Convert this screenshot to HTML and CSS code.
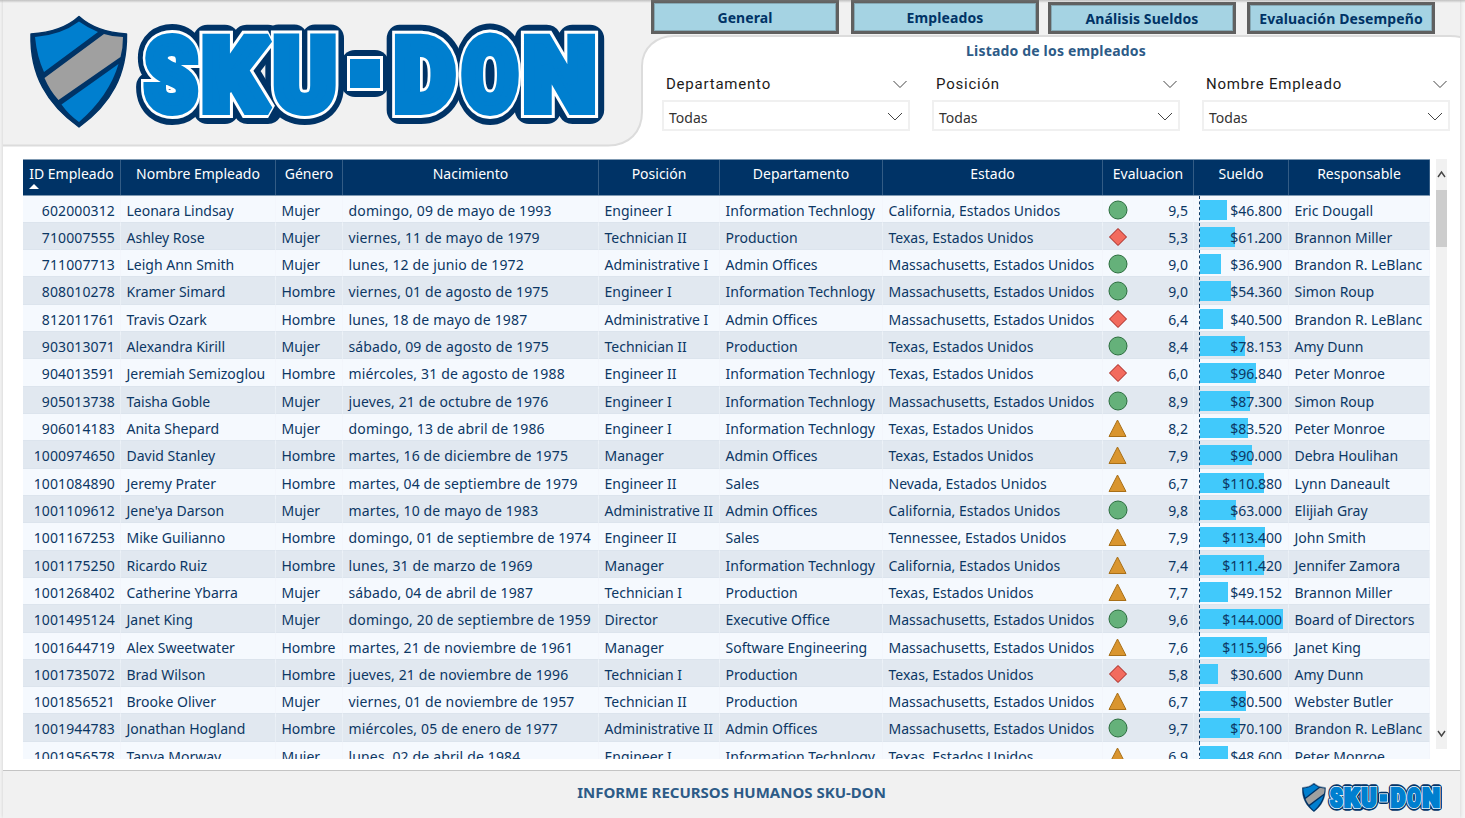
FILE: index.html
```html
<!DOCTYPE html>
<html lang="es">
<head>
<meta charset="utf-8">
<title>Informe Recursos Humanos</title>
<link rel="stylesheet" href="styles.css">
</head>
<body>
<div class="page">
  <header class="top">
    <svg class="top-shape" width="1457" height="150" viewBox="3 0 1457 150">
      <path class="band" d="M3 -5H1462V37.500Q1457 36 1450 36H674C656 36 642 48 642 66V112C642 132 629 145.500 608 145.500H-2V-5Z"/>
    </svg>
    <div class="brand">
      <svg class="logo" viewBox="30 16 575 112">
        <defs>
          <g id="mark">
            <path fill="#003366" stroke="#003366" stroke-width="1.500" stroke-linejoin="round" d="M79 16.500Q96 32 126.500 34C127 75 111 104 79 127C47 104 30 75 31 34Q62 32 79 16.500Z"/>
            <path fill="#007fcf" d="M79 21.500Q88 28 98 32L44 72Q37 57 35 37Q61 35 79 21.500Z"/>
            <path fill="#a0a0a0" d="M104 34Q113 37 123 37Q123 48 120.500 57L58.500 100Q50 91 44.500 78Z"/>
            <path fill="#007fcf" d="M118.500 64Q109 96 79 122Q69 115 61.500 104.500Z"/>
          </g>
          <g id="word">
            <text class="word" y="110"><tspan x="145" textLength="52" lengthAdjust="spacingAndGlyphs">S</tspan><tspan x="202" textLength="65" lengthAdjust="spacingAndGlyphs">K</tspan><tspan x="273.500" textLength="62.500" lengthAdjust="spacingAndGlyphs">U</tspan><tspan x="352" dy="-5" textLength="26" lengthAdjust="spacingAndGlyphs">-</tspan><tspan x="394.500" dy="5" textLength="60" lengthAdjust="spacingAndGlyphs">D</tspan><tspan x="462.500" textLength="55" lengthAdjust="spacingAndGlyphs">O</tspan><tspan x="523.500" textLength="72" lengthAdjust="spacingAndGlyphs">N</tspan></text>
            <rect x="355" y="64" width="20" height="19"/>
          </g>
        </defs>
        <use href="#mark"/>
        <use href="#word" class="w-navy"/>
        <use href="#word" class="w-white"/>
        <use href="#word" class="w-blue"/>
      </svg>
    </div>
    <div class="controls">
      <nav class="tabs">
        <a class="tab tall">General</a><a class="tab tall">Empleados</a><a class="tab">Análisis Sueldos</a><a class="tab">Evaluación Desempeño</a>
      </nav>
      <h1 class="title">Listado de los empleados</h1>
      <div class="slicers">
        <div class="slicer"><div class="s-head"><span>Departamento</span><svg width="14" height="9"><path d="M.5 1L7 7.500L13.500 1"/></svg></div><div class="s-box"><span>Todas</span><svg width="16" height="10"><path d="M1 1L8 8L15 1"/></svg></div></div>
        <div class="slicer"><div class="s-head"><span>Posición</span><svg width="14" height="9"><path d="M.5 1L7 7.500L13.500 1"/></svg></div><div class="s-box"><span>Todas</span><svg width="16" height="10"><path d="M1 1L8 8L15 1"/></svg></div></div>
        <div class="slicer"><div class="s-head"><span>Nombre Empleado</span><svg width="14" height="9"><path d="M.5 1L7 7.500L13.500 1"/></svg></div><div class="s-box"><span>Todas</span><svg width="16" height="10"><path d="M1 1L8 8L15 1"/></svg></div></div>
      </div>
    </div>
  </header>
  <main class="main">
    <div class="table">
      <div class="row head"><div>ID Empleado<i class="sort"></i></div><div>Nombre Empleado</div><div>Género</div><div>Nacimiento</div><div>Posición</div><div>Departamento</div><div>Estado</div><div>Evaluacion</div><div>Sueldo</div><div>Responsable</div></div>
      <div class="rows" id="rows"></div>
    </div>
    <div class="scroll">
      <svg width="11" height="30"><path d="M2 18L5.500 13L9 18"/></svg>
      <div class="thumb"></div>
      <svg class="down" width="11" height="30"><path d="M2 12L5.500 17L9 12"/></svg>
    </div>
  </main>
  <footer class="foot">
    <span class="foot-text">INFORME RECURSOS HUMANOS SKU-DON</span>
    <svg class="mini" viewBox="30 16 575 112" preserveAspectRatio="none">
      <use href="#mark"/>
      <use href="#word" class="w-navy"/>
      <use href="#word" class="w-white"/>
      <use href="#word" class="w-blue"/>
    </svg>
  </footer>
</div>
<script src="table.js"></script>
</body>
</html>
```
FILE: styles.css
```css
* { box-sizing: border-box; }
body { margin: 0; background: #f5f5f5; font-family: "Noto Sans", "Open Sans", sans-serif; overflow: hidden; }
.page { width: 1457px; height: 818px; margin-left: 3px; background: #fff; display: flex; flex-direction: column; box-shadow: 0 0 4px #ccc; position: relative; }
.page::before { content: ""; position: absolute; z-index: 3; top: 0; left: -3px; width: 1465px; height: 3px; background: linear-gradient(rgba(120,120,120,.4), rgba(160,160,160,0)); }
.top { height: 150px; display: flex; position: relative; flex: none; }
.top-shape { position: absolute; left: 0; top: 0; }
.band { fill: #f1f1f1; stroke: #dcdcdc; stroke-width: 2; }
.brand { width: 648px; padding: 16px 0 0 27px; position: relative; }
.logo { display: block; width: 575px; height: 112px; overflow: visible; }
.word { font-family: Roboto, sans-serif; font-weight: 900; font-size: 101px; }
.w-navy { fill: #003366; stroke: #003366; stroke-width: 28px; stroke-linejoin: round; }
.w-white { fill: #fff; stroke: #fff; stroke-width: 16px; stroke-linejoin: miter; stroke-miterlimit: 2; }
.w-blue { fill: #007fcf; stroke: #007fcf; stroke-width: 10px; stroke-linejoin: miter; stroke-miterlimit: 2; }
.controls { position: relative; width: 809px; }
.tabs { display: grid; grid-template-columns: 188px 188px 188px 188px; column-gap: 12px; height: 33px; align-items: end; }
.tabs .tab:nth-child(3) { margin-left: -3px; margin-right: 3px; }
.tabs .tab:nth-child(4) { margin-left: -4px; margin-right: 4px; }
.tab { height: 32px; border: 3px solid #606060; background: #a5d3e3; box-shadow: inset 0 0 0 1px #86a9b5; color: #003366; font-weight: 700; font-size: 14px; letter-spacing: .1px; line-height: 27px; text-align: center; white-space: nowrap; }
.tab.tall { height: 34px; line-height: 29px; }
.title { margin: 8px 0 0; height: 20px; font-size: 14px; letter-spacing: .18px; line-height: 20px; color: #2d5b87; text-align: center; padding-left: 1px; }
.slicers { display: flex; gap: 22px; padding: 11px 0 0 11px; }
.slicer { width: 248px; }
.s-head { display: flex; height: 28px; justify-content: space-between; align-items: center; padding: 0 3px 4px 4px; font: 400 15px Roboto, sans-serif; letter-spacing: .78px; color: #1c1b1a; }
.s-box { display: flex; height: 31px; justify-content: space-between; align-items: center; border: 2px solid #f0f0f0; padding: 3px 5px 0 5px; font-size: 14px; color: #333; }
.s-head svg, .s-box svg { fill: none; stroke: #444; stroke-width: 1; }
.s-box svg { margin-top: -1px; }
.main { display: flex; height: 620px; flex: none; padding: 9px 0 0 20px; }
.table { width: 1407px; height: 600px; overflow: hidden; color: #0c3764; }
.row { display: grid; grid-template-columns: 98px 155px 67px 256px 121px 163px 220px 91px 95px 141px; height: 27.320px; font-size: 14px; line-height: 28px; white-space: nowrap; }
.row > div { padding: 0 5px 0 5.500px; border-right: 1px solid rgba(240,244,249,.55); }
.row.head { height: 37px; background: #003366; color: #fff; border: 1px solid #7f99b2; border-width: 1px 0; line-height: 27px; text-align: center; }
.row.head > div { border-right-color: #335c85; position: relative; padding: 0 4px; }
.sort { position: absolute; left: 6px; bottom: 6px; border: 5.500px solid transparent; border-top: 0; border-bottom: 5px solid #fff; }
.rows { margin-top: -.5px; }
.rows .row { background: #f5f9fe; border-bottom: 1px solid #dce4ed; line-height: 30px; }
.rows .row:nth-child(even) { background: #e1e8f0; }
.row .num { text-align: right; letter-spacing: .12px; }
.row .date { letter-spacing: .15px; }
.row .eval { display: flex; justify-content: space-between; }
.eval svg { width: 20px; height: 20px; margin-top: 4px; margin-left: -.5px; }
.row .pay { position: relative; text-align: right; padding-right: 6px; }
.pay::before { content: ""; position: absolute; left: 5px; top: 0; bottom: 0; border-left: 1px dashed #123c68; }
.bar { position: absolute; left: 6px; top: 4px; height: 20px; background: #41c9fb; }
.pay span { position: relative; }
.scroll { width: 11px; margin-left: 6px; height: 590px; background: #f1f1f1; display: flex; flex-direction: column; }
.scroll svg { fill: none; stroke: #444; stroke-width: 1.400; }
.thumb { height: 57px; background: #cdcdcd; margin-top: 1px; }
.down { margin-top: auto; }
.foot { height: 48px; border-top: 1px solid #c4c4c4; background: #f1f1f1; display: grid; grid-template-columns: 1fr auto 1fr; align-items: start; }
.foot-text { grid-column: 2; font-weight: 700; font-size: 15px; line-height: 20px; margin-top: 11px; color: #2d5b87; }
.mini { width: 140px; height: 29px; justify-self: end; margin: 12px 18px 0 0; }
```
FILE: table.js
```js
const data = `602000312|Leonara Lindsay|Mujer|domingo, 09 de mayo de 1993|Engineer I|Information Technlogy|California|g|9,5|46.800|Eric Dougall
710007555|Ashley Rose|Mujer|viernes, 11 de mayo de 1979|Technician II|Production|Texas|r|5,3|61.200|Brannon Miller
711007713|Leigh Ann Smith|Mujer|lunes, 12 de junio de 1972|Administrative I|Admin Offices|Massachusetts|g|9,0|36.900|Brandon R. LeBlanc
808010278|Kramer Simard|Hombre|viernes, 01 de agosto de 1975|Engineer I|Information Technlogy|Massachusetts|g|9,0|54.360|Simon Roup
812011761|Travis Ozark|Hombre|lunes, 18 de mayo de 1987|Administrative I|Admin Offices|Massachusetts|r|6,4|40.500|Brandon R. LeBlanc
903013071|Alexandra Kirill|Mujer|sábado, 09 de agosto de 1975|Technician II|Production|Texas|g|8,4|78.153|Amy Dunn
904013591|Jeremiah Semizoglou|Hombre|miércoles, 31 de agosto de 1988|Engineer II|Information Technlogy|Texas|r|6,0|96.840|Peter Monroe
905013738|Taisha Goble|Mujer|jueves, 21 de octubre de 1976|Engineer I|Information Technlogy|Massachusetts|g|8,9|87.300|Simon Roup
906014183|Anita Shepard|Mujer|domingo, 13 de abril de 1986|Engineer I|Information Technlogy|Texas|y|8,2|83.520|Peter Monroe
1000974650|David Stanley|Hombre|martes, 16 de diciembre de 1975|Manager|Admin Offices|Texas|y|7,9|90.000|Debra Houlihan
1001084890|Jeremy Prater|Hombre|martes, 04 de septiembre de 1979|Engineer II|Sales|Nevada|y|6,7|110.880|Lynn Daneault
1001109612|Jene'ya Darson|Mujer|martes, 10 de mayo de 1983|Administrative II|Admin Offices|California|g|9,8|63.000|Elijiah Gray
1001167253|Mike Guilianno|Hombre|domingo, 01 de septiembre de 1974|Engineer II|Sales|Tennessee|y|7,9|113.400|John Smith
1001175250|Ricardo Ruiz|Hombre|lunes, 31 de marzo de 1969|Manager|Information Technlogy|California|y|7,4|111.420|Jennifer Zamora
1001268402|Catherine Ybarra|Mujer|sábado, 04 de abril de 1987|Technician I|Production|Texas|y|7,7|49.152|Brannon Miller
1001495124|Janet King|Mujer|domingo, 20 de septiembre de 1959|Director|Executive Office|Massachusetts|g|9,6|144.000|Board of Directors
1001644719|Alex Sweetwater|Hombre|martes, 21 de noviembre de 1961|Manager|Software Engineering|Massachusetts|y|7,6|115.966|Janet King
1001735072|Brad Wilson|Hombre|jueves, 21 de noviembre de 1996|Technician I|Production|Texas|r|5,8|30.600|Amy Dunn
1001856521|Brooke Oliver|Mujer|viernes, 01 de noviembre de 1957|Technician II|Production|Massachusetts|y|6,7|80.500|Webster Butler
1001944783|Jonathan Hogland|Hombre|miércoles, 05 de enero de 1977|Administrative II|Admin Offices|Massachusetts|g|9,7|70.100|Brandon R. LeBlanc
1001956578|Tanya Morway|Mujer|lunes, 02 de abril de 1984|Engineer I|Information Technlogy|Texas|y|6,9|48.600|Peter Monroe`;
const icons = {
  g: '<circle cx="10" cy="10" r="9" fill="#65b17a" stroke="#2c6e3f"/>',
  r: '<path d="M10 1.500L18.500 10L10 18.500L1.500 10Z" fill="#f26b5e" stroke="#a3201a"/>',
  y: '<path d="M9.500 2L18 18.500H1Z" fill="#d9952f" stroke="#a86f18"/>'
};
document.getElementById('rows').innerHTML = data.split('\n').map(line => {
  const [id, name, sex, born, pos, dep, state, kind, score, pay, boss] = line.split('|');
  const width = parseFloat(pay) / 144 * 83;
  return `<div class="row"><div class="num">${id}</div><div>${name}</div><div>${sex}</div><div class="date">${born}</div><div>${pos}</div><div>${dep}</div><div>${state}, Estados Unidos</div><div class="eval"><svg>${icons[kind]}</svg><span>${score}</span></div><div class="pay"><i class="bar" style="width:${width.toFixed(1)}px"></i><span>$${pay}</span></div><div>${boss}</div></div>`;
}).join('');
```
